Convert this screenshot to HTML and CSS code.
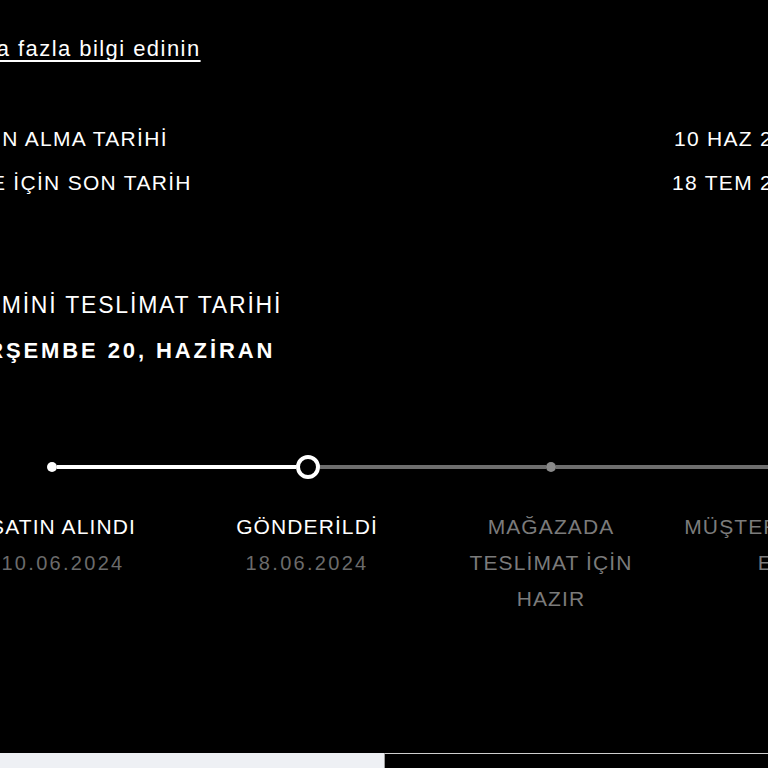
FILE: index.html
```html
<!DOCTYPE html>
<html lang="tr">
<head>
<meta charset="utf-8">
<title>Sipariş durumu</title>
<link rel="stylesheet" href="styles.css">
</head>
<body>
<main class="page">
  <p class="more"><a href="#">Daha fazla bilgi edinin</a></p>

  <dl class="facts">
    <div class="fact"><dt>SATIN ALMA TARİHİ</dt><dd>10 HAZ 2024</dd></div>
    <div class="fact"><dt>İADE İÇİN SON TARİH</dt><dd>18 TEM 2024</dd></div>
  </dl>

  <section class="eta">
    <p class="eta-label">TAHMİNİ TESLİMAT TARİHİ</p>
    <p class="eta-date">PERŞEMBE 20, HAZİRAN</p>
  </section>

  <section class="tracker">
    <div class="track">
      <span class="node done"></span>
      <span class="seg seg-a done"></span>
      <span class="node current"></span>
      <span class="seg seg-b"></span>
      <span class="node"></span>
      <span class="seg seg-c"></span>
      <span class="node"></span>
      <span class="seg seg-d"></span>
    </div>
    <ol class="steps">
      <li class="step done"><span class="step-name">SATIN ALINDI</span><span class="step-date">10.06.2024</span></li>
      <li class="step done"><span class="step-name">GÖNDERİLDİ</span><span class="step-date">18.06.2024</span></li>
      <li class="step"><span class="step-name">MAĞAZADA TESLİMAT İÇİN HAZIR</span></li>
      <li class="step"><span class="step-name">MÜŞTERİYE TESLİM EDİLDİ</span></li>
    </ol>
  </section>
</main>

<div class="actions">
  <span class="btn btn-light"></span>
  <span class="btn btn-dark"></span>
</div>
</body>
</html>
```

FILE: styles.css
```css
* { box-sizing: border-box; margin: 0; padding: 0; }
html { background: #000; overflow: hidden; }
body {
  width: 768px;
  height: 768px;
  background: #000;
  color: #fff;
  font-family: "Liberation Sans", Arial, sans-serif;
}

.page {
  margin-left: -48px;
  width: 860px;
  padding-top: 34px;
}

.more {
  font-size: 22px;
  line-height: 30px;
  letter-spacing: 1.45px;
}
.more a {
  color: #fff;
  text-decoration: underline;
  text-decoration-thickness: 1.5px;
  text-underline-offset: 4px;
  text-decoration-skip-ink: none;
}

.facts { margin-top: 53px; }
.fact {
  display: flex;
  justify-content: space-between;
  font-size: 21px;
  line-height: 44px;
  letter-spacing: 1.3px;
}

.eta { margin-top: 84px; }
.eta-label {
  font-size: 23px;
  line-height: 32px;
  letter-spacing: 1.8px;
}
.eta-date {
  margin-top: 10px;
  font-size: 22px;
  line-height: 40px;
  font-weight: 700;
  letter-spacing: 2.9px;
}

.tracker { margin-top: 84px; }
.track {
  display: flex;
  align-items: center;
  height: 24px;
  margin-left: 95px;
}
.node {
  flex: none;
  width: 10px;
  height: 10px;
  border-radius: 50%;
  background: #8a8a8a;
}
.node.done { background: #fff; }
.node.current {
  width: 24px;
  height: 24px;
  border: 4px solid #fff;
  background: #000;
}
.seg {
  flex: none;
  height: 4px;
  background: #6e6e6e;
}
.seg.done { background: #fff; }
.seg-a { width: 239px; }
.seg-b { width: 226px; }
.seg-c { width: 233px; }
.seg-d { flex: 1; }

.steps {
  list-style: none;
  display: grid;
  grid-template-columns: repeat(4, 244px);
  margin-left: -11px;
  margin-top: 30px;
}
.step {
  display: flex;
  flex-direction: column;
  align-items: center;
  text-align: center;
  padding: 0 8px;
  color: #7b7b7b;
}
.step-name {
  font-size: 21px;
  line-height: 36px;
  letter-spacing: 1.1px;
}
.step.done .step-name { color: #fff; }
.step-date {
  font-size: 20px;
  line-height: 36px;
  letter-spacing: 2.3px;
  color: #6b6b6b;
}

.actions {
  position: fixed;
  left: 0;
  right: 0;
  top: 753px;
  height: 64px;
  display: grid;
  grid-template-columns: 1fr 1fr;
}
.btn-light { background: #eef0f4; }
.btn-dark {
  background: #000;
  border-top: 1px solid #cfcfcf;
  border-left: 1px solid #9d9d9d;
}
```
